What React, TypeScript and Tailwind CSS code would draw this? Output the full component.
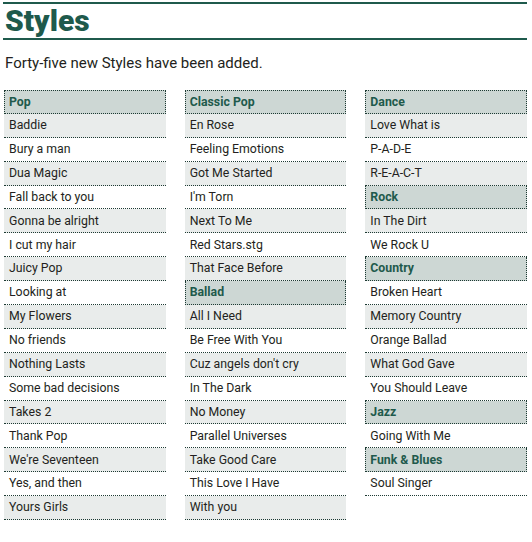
const columns: { title: string; items: string[] }[][] = [
  [
    {
      title: "Pop",
      items: [
        "Baddie",
        "Bury a man",
        "Dua Magic",
        "Fall back to you",
        "Gonna be alright",
        "I cut my hair",
        "Juicy Pop",
        "Looking at",
        "My Flowers",
        "No friends",
        "Nothing Lasts",
        "Some bad decisions",
        "Takes 2",
        "Thank Pop",
        "We're Seventeen",
        "Yes, and then",
        "Yours Girls",
      ],
    },
  ],
  [
    {
      title: "Classic Pop",
      items: [
        "En Rose",
        "Feeling Emotions",
        "Got Me Started",
        "I'm Torn",
        "Next To Me",
        "Red Stars.stg",
        "That Face Before",
      ],
    },
    {
      title: "Ballad",
      items: [
        "All I Need",
        "Be Free With You",
        "Cuz angels don't cry",
        "In The Dark",
        "No Money",
        "Parallel Universes",
        "Take Good Care",
        "This Love I Have",
        "With you",
      ],
    },
  ],
  [
    { title: "Dance", items: ["Love What is", "P-A-D-E", "R-E-A-C-T"] },
    { title: "Rock", items: ["In The Dirt", "We Rock U"] },
    {
      title: "Country",
      items: [
        "Broken Heart",
        "Memory Country",
        "Orange Ballad",
        "What God Gave",
        "You Should Leave",
      ],
    },
    { title: "Jazz", items: ["Going With Me"] },
    { title: "Funk & Blues", items: ["Soul Singer"] },
  ],
];

type Row = { text: string; header: boolean };

const flatten = (groups: { title: string; items: string[] }[]) => {
  const rows: Row[] = [];
  groups.forEach((g) => {
    rows.push({ text: g.title, header: true });
    g.items.forEach((i) => rows.push({ text: i, header: false }));
  });
  return rows;
};

const StyleColumn = ({ rows }: { rows: Row[] }) => {
  return (
    <div className="flex flex-col">
      {rows.map((row, idx) =>
        row.header ? (
          <div
            key={idx}
            className={`h-[23.9px] flex items-center pl-[4px] bg-[#cdd7d4] text-[#1f5a4c] font-bold border-x border-b border-dotted border-[#1d3a33] ${
              idx === 0 ? "border-t" : ""
            }`}
          >
            {row.text}
          </div>
        ) : (
          <div
            key={idx}
            className={`h-[23.9px] flex items-center pl-[5px] border-b border-dotted border-[#1d3a33] ${
              idx % 2 === 1 ? "bg-[#e9eceb]" : "bg-white"
            }`}
          >
            {row.text}
          </div>
        )
      )}
    </div>
  );
};

export default function App() {
  return (
    <div className="w-[532px] h-[542px] bg-white font-['Roboto',sans-serif] text-[#231f20]">
      <div className="ml-[3px] w-[524px] pt-[2px]">
        <div className="border-y-2 border-[#1f5a4c] h-[38px] flex items-center pl-[2px]">
          <h1 className="text-[30px] font-black text-[#1f5a4c] leading-none">
            Styles
          </h1>
        </div>
        <p className="mt-[14px] ml-[2px] text-[15px] leading-[18px]">
          Forty-five new Styles have been added.
        </p>
        <div className="mt-[18px] ml-[1px] grid grid-cols-3 gap-x-[19px] text-[12.3px]">
          {columns.map((groups, i) => (
            <StyleColumn key={i} rows={flatten(groups)} />
          ))}
        </div>
      </div>
    </div>
  );
}
